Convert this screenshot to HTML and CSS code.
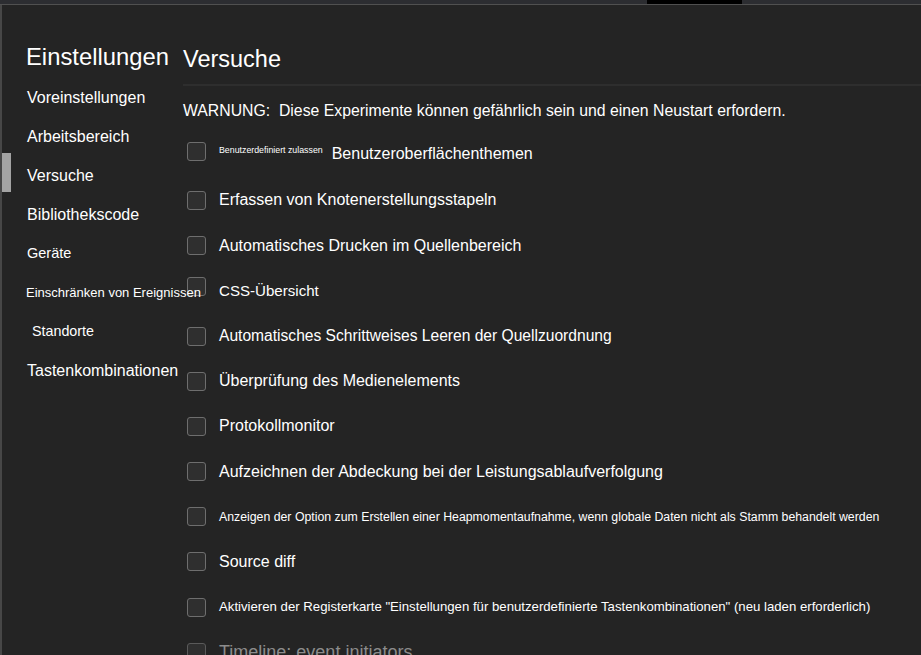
FILE: index.html
```html
<!DOCTYPE html>
<html lang="de">
<head>
<meta charset="utf-8">
<title>Einstellungen</title>
<link rel="stylesheet" href="styles.css">
</head>
<body>
<div class="topbar">
  <div class="top-fill"></div>
  <div class="top-black"></div>
  <div class="top-fill"></div>
</div>
<div class="main">
  <nav class="sidebar">
    <h1 class="side-title">Einstellungen</h1>
    <ul class="side-list">
      <li class="side-item">Voreinstellungen</li>
      <li class="side-item">Arbeitsbereich</li>
      <li class="side-item active">Versuche</li>
      <li class="side-item">Bibliothekscode</li>
      <li class="side-item small-a">Geräte</li>
      <li class="side-item small-b">Einschränken von Ereignissen</li>
      <li class="side-item small-c">Standorte</li>
      <li class="side-item">Tastenkombinationen</li>
    </ul>
  </nav>
  <section class="content">
    <h2 class="content-title">Versuche</h2>
    <p class="warning">WARNUNG:&nbsp; Diese Experimente können gefährlich sein und einen Neustart erfordern.</p>
    <div class="rows">
      <label class="row row-first"><span class="box"></span><span class="label"><span class="tiny">Benutzerdefiniert zulassen</span>Benutzeroberflächenthemen</span></label>
      <label class="row"><span class="box"></span><span class="label">Erfassen von Knotenerstellungsstapeln</span></label>
      <label class="row"><span class="box"></span><span class="label">Automatisches Drucken im Quellenbereich</span></label>
      <label class="row row-css"><span class="box"></span><span class="label label-css">CSS-Übersicht</span></label>
      <label class="row"><span class="box"></span><span class="label label-q">Automatisches Schrittweises Leeren der Quellzuordnung</span></label>
      <label class="row"><span class="box"></span><span class="label">Überprüfung des Medienelements</span></label>
      <label class="row"><span class="box"></span><span class="label">Protokollmonitor</span></label>
      <label class="row"><span class="box"></span><span class="label">Aufzeichnen der Abdeckung bei der Leistungsablaufverfolgung</span></label>
      <label class="row"><span class="box"></span><span class="label label-s">Anzeigen der Option zum Erstellen einer Heapmomentaufnahme, wenn globale Daten nicht als Stamm behandelt werden</span></label>
      <label class="row"><span class="box"></span><span class="label">Source diff</span></label>
      <label class="row"><span class="box"></span><span class="label label-m">Aktivieren der Registerkarte "Einstellungen für benutzerdefinierte Tastenkombinationen" (neu laden erforderlich)</span></label>
      <label class="row dim"><span class="box"></span><span class="label label-l">Timeline: event initiators</span></label>
    </div>
  </section>
</div>
</body>
</html>
```
FILE: styles.css
```css
html, body {
  margin: 0;
  padding: 0;
  height: 100%;
  overflow: hidden;
}
body {
  background: #242424;
  color: #ffffff;
  font-family: "Liberation Sans", Arial, sans-serif;
}
.topbar {
  display: grid;
  grid-template-columns: 647px 95px 1fr;
  height: 4px;
  border-bottom: 1px solid #505050;
}
.top-fill { background: #2c2d31; }
.top-black { background: #000000; }
.main {
  display: flex;
  height: calc(100% - 5px);
  border-left: 2px solid #474747;
}
.sidebar {
  position: relative;
  width: 181px;
  flex: none;
  padding-top: 38px;
}
.side-title {
  margin: 0 0 7px 24px;
  font-size: 23.8px;
  font-weight: normal;
  line-height: 28px;
  white-space: nowrap;
}
.side-list {
  list-style: none;
  margin: 0;
  padding: 0;
}
.side-item {
  position: relative;
  height: 39px;
  line-height: 39px;
  padding-left: 25px;
  font-size: 16px;
  white-space: nowrap;
}
.side-item.active::before {
  content: "";
  position: absolute;
  left: 0;
  top: -3px;
  width: 9px;
  height: 39px;
  background: #a3a3a3;
}
.side-item.small-a { font-size: 14.5px; }
.side-item.small-b { font-size: 13px; padding-left: 24px; }
.side-item.small-c { font-size: 14.3px; padding-left: 30px; }
.content {
  flex: 1;
  min-width: 0;
  padding-top: 39px;
}
.content-title {
  margin: 0;
  padding: 1px 0 11px 0;
  font-size: 23.5px;
  font-weight: normal;
  line-height: 28px;
  border-bottom: 2px solid #2e2e2e;
}
.warning {
  margin: 15px 0 8px 0;
  font-size: 15.8px;
  line-height: 20px;
  white-space: nowrap;
}
.rows {
  display: flex;
  flex-direction: column;
}
.row {
  display: flex;
  align-items: center;
  height: 45.2px;
  flex: none;
  padding-left: 4px;
  white-space: nowrap;
}
.row-first {
  height: 45.4px;
  margin-bottom: 3.5px;
}
.box {
  width: 17px;
  height: 17px;
  flex: none;
  border: 1px solid #6e6e6e;
  border-radius: 3px;
  background: #2f2f2f;
  margin-right: 13px;
}
.row-css .box { margin-top: -9px; }
.label {
  font-size: 16px;
  line-height: 20px;
}
.tiny {
  font-size: 8.8px;
  vertical-align: 6px;
  margin-right: 9px;
}
.label-css { font-size: 15.1px; }
.label-q { font-size: 15.6px; }
.label-s { font-size: 12.3px; }
.label-m { font-size: 13.2px; }
.label-l { font-size: 18px; }
.dim { color: #8c8c8c; }
.dim .box { border-color: #5a5a5a; }
```
